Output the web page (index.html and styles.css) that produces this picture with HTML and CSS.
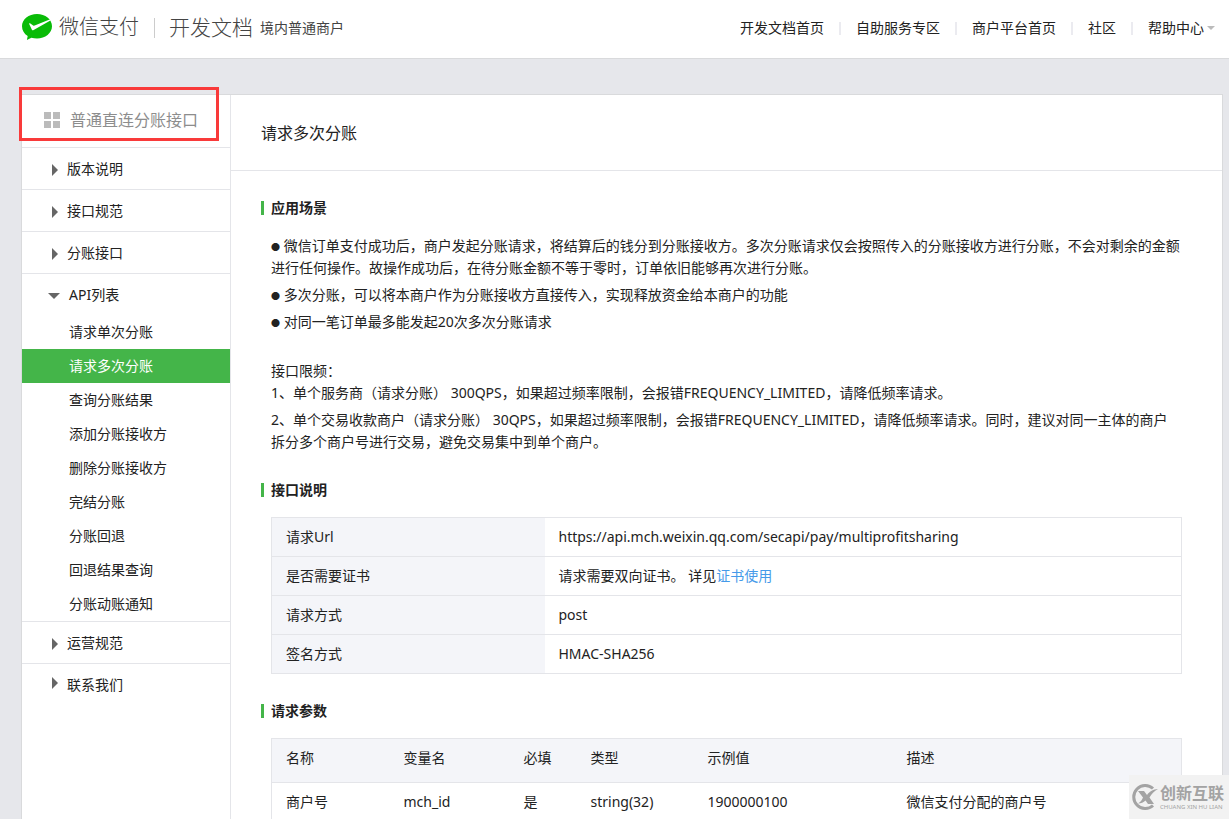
FILE: index.html
```html
<!DOCTYPE html>
<html lang="zh-CN">
<head>
<meta charset="utf-8">
<meta name="viewport" content="width=device-width, initial-scale=1">
<title>请求多次分账 - 微信支付开发文档</title>
<link rel="stylesheet" href="styles.css">
</head>
<body>
<header class="header">
  <div class="brand">
    <svg class="brand-logo" viewBox="0 0 30 27" aria-hidden="true">
      <path fill="#09bb07" d="M15 0C6.700 0 0 5.300 0 12.200c0 4 2.200 7.600 5.700 9.900l-.8 4 4.500-2.400c1.800.5 3.600.7 5.600.7 8.300 0 15-5.400 15-12.200S23.300 0 15 0z"/>
      <path fill="#fff" d="M11.200 16.200c-.5.300-1 .1-1.300-.5l-2.700-5.600c-.3-.7.300-1.100.8-.8l3.200 2.200c.5.300 1 .3 1.500.1L27.600 5.500l.8 1.100z"/>
    </svg>
    <span class="brand-name">微信支付</span>
    <span class="brand-line"></span>
    <span class="brand-docs">开发文档</span>
    <span class="brand-type">境内普通商户</span>
  </div>
  <nav class="topnav">
    <a href="#">开发文档首页</a>
    <a href="#">自助服务专区</a>
    <a href="#">商户平台首页</a>
    <a href="#">社区</a>
    <a href="#" class="has-menu">帮助中心</a>
  </nav>
</header>

<div class="page">
  <aside class="sidebar">
    <div class="sidebar-title">
      <svg class="grid-icon" viewBox="0 0 16 16" aria-hidden="true"><path fill="#bbb" d="M0 0h7v7H0zM9 0h7v7H9zM0 9h7v7H0zM9 9h7v7H9z"/></svg>
      <span>普通直连分账接口</span>
      <span class="highlight"></span>
    </div>
    <ul class="menu">
      <li class="group"><a class="group-link" href="#">版本说明</a></li>
      <li class="group"><a class="group-link" href="#">接口规范</a></li>
      <li class="group"><a class="group-link" href="#">分账接口</a></li>
      <li class="group">
        <a class="group-link open" href="#">API列表</a>
        <ul class="submenu">
          <li><a href="#">请求单次分账</a></li>
          <li><a class="active" href="#">请求多次分账</a></li>
          <li><a href="#">查询分账结果</a></li>
          <li><a href="#">添加分账接收方</a></li>
          <li><a href="#">删除分账接收方</a></li>
          <li><a href="#">完结分账</a></li>
          <li><a href="#">分账回退</a></li>
          <li><a href="#">回退结果查询</a></li>
          <li><a href="#">分账动账通知</a></li>
        </ul>
      </li>
      <li class="group"><a class="group-link" href="#">运营规范</a></li>
      <li class="group"><a class="group-link" href="#">联系我们</a></li>
    </ul>
  </aside>

  <main class="content">
    <h1 class="title">请求多次分账</h1>
    <div class="body">
      <section class="section">
        <h2 class="heading">应用场景</h2>
        <div class="text">
          <p><span class="dot">●</span> 微信订单支付成功后，商户发起分账请求，将结算后的钱分到分账接收方。多次分账请求仅会按照传入的分账接收方进行分账，不会对剩余的金额进行任何操作。故操作成功后，在待分账金额不等于零时，订单依旧能够再次进行分账。</p>
          <p><span class="dot">●</span> 多次分账，可以将本商户作为分账接收方直接传入，实现释放资金给本商户的功能</p>
          <p><span class="dot">●</span> 对同一笔订单最多能发起20次多次分账请求</p>
          <p><br>接口限频：<br>1、单个服务商（请求分账） 300QPS，如果超过频率限制，会报错FREQUENCY_LIMITED，请降低频率请求。</p>
          <p>2、单个交易收款商户（请求分账） 30QPS，如果超过频率限制，会报错FREQUENCY_LIMITED，请降低频率请求。同时，建议对同一主体的商户拆分多个商户号进行交易，避免交易集中到单个商户。</p>
        </div>
      </section>

      <section class="section">
        <h2 class="heading">接口说明</h2>
        <table class="table info">
          <tr><th scope="row">请求Url</th><td>https://api.mch.weixin.qq.com/secapi/pay/multiprofitsharing</td></tr>
          <tr><th scope="row">是否需要证书</th><td>请求需要双向证书。 详见<a href="#">证书使用</a></td></tr>
          <tr><th scope="row">请求方式</th><td>post</td></tr>
          <tr><th scope="row">签名方式</th><td>HMAC-SHA256</td></tr>
        </table>
      </section>

      <section class="section">
        <h2 class="heading">请求参数</h2>
        <table class="table params">
          <colgroup><col class="c-name"><col class="c-var"><col class="c-req"><col class="c-type"><col class="c-sample"><col></colgroup>
          <thead><tr><th>名称</th><th>变量名</th><th>必填</th><th>类型</th><th>示例值</th><th>描述</th></tr></thead>
          <tbody><tr><td>商户号</td><td>mch_id</td><td>是</td><td>string(32)</td><td>1900000100</td><td>微信支付分配的商户号</td></tr></tbody>
        </table>
      </section>
    </div>
  </main>
</div>

<div class="watermark">
  <svg class="mark" viewBox="0 0 28 26" aria-hidden="true">
    <path fill="none" stroke="#a3a3a3" stroke-width="3" d="M22 4.500A11.500 11.500 0 1 0 22 21.500"/>
    <path fill="#a3a3a3" d="M7 7h6l3 4c3-4 6-5.500 11-6-4 2-6.500 5-8.500 8.500L23 20h-6l-2.500-3.500C12.500 18.500 10 19.500 7 19.500c2.500-1.500 4-3.500 5-6z"/>
  </svg>
  <div class="mark-text">
    <span class="mark-cn">创新互联</span>
    <span class="mark-en">CHUANG XIN HU LIAN</span>
  </div>
</div>
</body>
</html>
```
FILE: styles.css
```css
* { box-sizing: border-box; }

html { scrollbar-width: none; }

body {
  margin: 0;
  min-height: 100vh;
  display: flex;
  flex-direction: column;
  background: #e6e7eb;
  color: #222;
  font: 14px/22px "Noto Sans", "Noto Sans CJK SC", sans-serif;
  text-spacing-trim: space-all;
}

a { color: inherit; text-decoration: none; }
ul { margin: 0; padding: 0; list-style: none; }

.header {
  display: flex;
  justify-content: space-between;
  align-items: center;
  height: 59px;
  padding: 0 14px 3px 22px;
  background: #fff;
  border-bottom: 1px solid #d9dadc;
}

.brand { display: flex; align-items: center; color: #444; white-space: nowrap; }
.brand-logo { width: 30px; height: 27px; margin-right: 7px; }
.brand-name { font-size: 20px; font-weight: 300; }
.brand-line { width: 1px; height: 20px; margin: 0 14px 0 15px; background: #ccc; }
.brand-docs { font-size: 21px; font-weight: 300; }
.brand-name, .brand-docs { padding-bottom: 2px; }
.brand-type { margin-left: 7px; }

.topnav { display: flex; align-items: center; white-space: nowrap; }
.topnav a { display: flex; align-items: center; }
.topnav a + a::before {
  content: "";
  width: 2px;
  height: 13px;
  margin: 2px 15px 0;
  background: #ebebf0;
}
.has-menu::after {
  content: "";
  margin-left: 3px;
  border: 4px solid transparent;
  border-top-color: #bbb;
  border-bottom: 0;
}

.page {
  flex: 1;
  display: flex;
  margin: 35px 6px 0 21px;
  background: #fff;
  border: 1px solid #d9dadc;
  border-bottom: 0;
}

.sidebar { flex: none; width: 209px; border-right: 1px solid #e4e5e9; }

.sidebar-title {
  position: relative;
  display: flex;
  align-items: center;
  gap: 10px;
  height: 52px;
  padding: 0 0 2px 22px;
  color: #8d8d8d;
  font-size: 16px;
}
.grid-icon { width: 16px; height: 16px; }
.highlight {
  position: absolute;
  top: -8px;
  left: -3px;
  width: 200px;
  height: 54px;
  border: 3px solid #f93a3a;
}

.group { border-top: 1px solid #e4e5e9; }
.group-link {
  display: flex;
  align-items: center;
  height: 41px;
  padding-left: 30px;
}
.group-link::before {
  content: "";
  margin: 2px 9px 0 0;
  border: 6px solid transparent;
  border-left-color: #666;
  border-right: 0;
}
.group:last-child .group-link::before { margin: 0 9px 4px 0; }
.group-link.open { padding-left: 26px; }
.group-link.open::before {
  border: 6px solid transparent;
  border-top-color: #666;
  border-bottom: 0;
}
.submenu a { display: block; padding-left: 47px; line-height: 34px; }
.submenu .active { background: #44b549; color: #fff; }

.content { flex: 1; min-width: 0; }
.title {
  margin: 0;
  padding: 2px 30px 0;
  border-bottom: 1px solid #e4e5e9;
  font-size: 16px;
  font-weight: 400;
  line-height: 73px;
}
.body { padding: 26px 40px 0 30px; }

.heading {
  display: flex;
  align-items: center;
  margin: 0 0 16px;
  font-size: 14px;
  font-weight: 700;
  line-height: 22px;
}
.heading::before {
  content: "";
  width: 3px;
  height: 14px;
  margin-right: 7px;
  background: #44b549;
}
.section { margin-bottom: 26px; }
.text { margin: 0 2px 0 10px; }
.text p { margin: 0 0 5px; }
.dot { font-size: 9px; line-height: 9px; vertical-align: 1px; }

.table {
  width: calc(100% - 10px);
  margin-left: 10px;
  border: 1px solid #e4e5e9;
  border-collapse: collapse;
  table-layout: fixed;
}
.table th, .table td {
  height: 39px;
  padding: 0 14px;
  border-top: 1px solid #e4e5e9;
  font-weight: 400;
  text-align: left;
}
.table th { background: #f4f5f9; }
.table a { color: #459ae9; }
.info th { width: 30%; }
.params thead th { height: 44px; padding-bottom: 5px; }
.c-name { width: 118px; }
.c-type { width: 117px; }
.c-var { width: 120px; }
.c-req { width: 67px; }
.c-sample { width: 199px; }

.watermark {
  position: fixed;
  right: 0;
  bottom: 0;
  display: flex;
  align-items: center;
  gap: 1px;
  width: 100px;
  height: 44px;
  padding-left: 2px;
  background: #f2f2f2;
  color: #a3a3a3;
  white-space: nowrap;
}
.mark { flex: none; width: 28px; height: 26px; }
.mark-text { display: flex; flex-direction: column; }
.mark-cn { font-size: 16px; font-weight: 700; line-height: 20px; }
.mark-en { font-size: 6px; line-height: 8px; }
```
